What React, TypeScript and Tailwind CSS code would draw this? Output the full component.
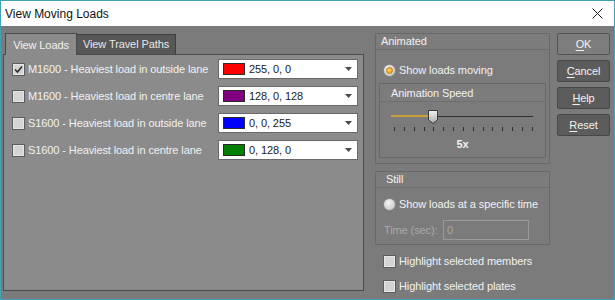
import React from "react";

const loads = [
  { label: "M1600 - Heaviest load in outside lane", color: "bg-[#ff0000]", rgb: "255, 0, 0", checked: true },
  { label: "M1600 - Heaviest load in centre lane", color: "bg-[#800080]", rgb: "128, 0, 128", checked: false },
  { label: "S1600 - Heaviest load in outside lane", color: "bg-[#0000ff]", rgb: "0, 0, 255", checked: false },
  { label: "S1600 - Heaviest load in centre lane", color: "bg-[#008000]", rgb: "0, 128, 0", checked: false },
];

function Checkbox({ checked }: { checked?: boolean }) {
  return (
    <div className="w-[13px] h-[13px] shrink-0 border border-[#5c5c5c] bg-[#cfcfcf] flex items-center justify-center">
      <div className="w-[11px] h-[11px] border border-[#e6e6e6] bg-[#d4d4d4] flex items-center justify-center">
        {checked && (
          <svg width="9" height="9" viewBox="0 0 9 9">
            <path d="M1 4.5 L3.5 7 L8 1.5" fill="none" stroke="#2b2b2b" strokeWidth="1.6" />
          </svg>
        )}
      </div>
    </div>
  );
}

function Radio({ checked }: { checked?: boolean }) {
  return (
    <div className="w-[13px] h-[13px] shrink-0 rounded-full border border-[#8a8a8a] bg-[radial-gradient(circle_at_40%_35%,#f4f4f4,#bdbdbd)] flex items-center justify-center">
      {checked && (
        <div className="w-[7px] h-[7px] rounded-full bg-[radial-gradient(circle_at_40%_35%,#ffd36a,#e69500)] border border-[#c07a00]" />
      )}
    </div>
  );
}

function GroupHeader({ children, pad }: { children: React.ReactNode; pad: string }) {
  return (
    <div className={`h-[16px] flex items-center border-b border-[#6f6f6f] bg-[#7c7c7c] ${pad}`}>
      {children}
    </div>
  );
}

function Btn({ first, rest, primary }: { first: string; rest: string; primary?: boolean }) {
  return (
    <div
      className={[
        "h-[22px] rounded-[2px] border flex items-center justify-center text-[#f2f2f2]",
        primary ? "bg-[#7d7d7d] border-[#555555]" : "bg-[#5c5c5c] border-[#474747]",
      ].join(" ")}
    >
      <span>
        <span className="underline underline-offset-2">{first}</span>
        {rest}
      </span>
    </div>
  );
}

export default function App() {
  return (
    <div
      className="w-[615px] h-[300px] border border-[#42a0b8] flex flex-col bg-[#7b7b7b] text-[11px] leading-none tracking-[-0.1px] whitespace-nowrap text-[#f2f2f2]"
      style={{ fontFamily: '"Liberation Sans", Arial, sans-serif' }}
    >
      {/* Title bar */}
      <div className="h-[25px] shrink-0 bg-white flex items-center justify-between pl-[4px] pr-[11px] text-[#111111]">
        <span className="text-[12px] tracking-normal">View Moving Loads</span>
        <svg width="11" height="11" viewBox="0 0 11 11">
          <path d="M0.5 0.5 L10.5 10.5 M10.5 0.5 L0.5 10.5" stroke="#1a1a1a" strokeWidth="1" />
        </svg>
      </div>

      <div className="flex-1 flex">
        {/* Left: tabs */}
        <div className="w-[361px] ml-[2px] pt-[7px] pb-[8px] flex flex-col">
          <div className="h-[21px] flex items-end pl-[2px]">
            <div className="relative z-10 -mb-px h-[22px] w-[72px] bg-[#8b8b8b] border border-b-0 border-[#4a4a4a] flex items-center justify-center pt-[1px]">
              View Loads
            </div>
            <div className="h-[20px] w-[100px] -ml-px bg-[#575757] border border-b-0 border-[#3f3f3f] flex items-center justify-center text-[#e8e8e8]">
              View Travel Paths
            </div>
          </div>
          <div className="flex-1 bg-[#8b8b8b] border border-[#4a4a4a] pt-[4px] flex flex-col gap-[7px]">
            {loads.map((l) => (
              <div key={l.label} className="h-[20px] flex items-center pl-[8px] pr-[5px]">
                <Checkbox checked={l.checked} />
                <span className="ml-[3px]">{l.label}</span>
                <div className="ml-auto w-[140px] h-[20px] bg-white border border-[#6a6a6a] flex items-center pl-[4px] pr-[5px] text-[#1a1a1a]">
                  <div className={`w-[22px] h-[12px] border border-[#2a2a2a] ${l.color}`} />
                  <span className="ml-[4px]">{l.rgb}</span>
                  <svg className="ml-auto" width="7" height="4" viewBox="0 0 7 4">
                    <path d="M0 0 H7 L3.5 4 Z" fill="#4a4a4a" />
                  </svg>
                </div>
              </div>
            ))}
          </div>
        </div>

        {/* Middle: options */}
        <div className="w-[175px] ml-[11px] pt-[7px] flex flex-col">
          <div className="h-[131px] border border-[#686868] rounded-[1px] flex flex-col">
            <GroupHeader pad="pl-[5px]">Animated</GroupHeader>
            <div className="h-[16px] mt-[12px] flex items-center pl-[7px]">
              <Radio checked />
              <span className="ml-[3px]">Show loads moving</span>
            </div>
            <div className="mx-[3px] mt-[5px] h-[75px] border border-[#686868] rounded-[1px] flex flex-col">
              <div className="h-[18px] flex items-center pl-[11px] pt-[1px] border-b border-[#6f6f6f] bg-[#7c7c7c]">
                Animation Speed
              </div>
              <div className="relative h-[14px] mt-[8px] ml-[11px] w-[142px]">
                <div className="absolute left-0 right-0 top-[6px] h-px bg-[#2e2e2e]" />
                <div className="absolute left-0 w-[42px] top-[5px] h-[2px] bg-[#c9a03a]" />
                <svg className="absolute left-[37px] top-0" width="10" height="14" viewBox="0 0 10 14">
                  <defs>
                    <linearGradient id="thumb" x1="0" y1="0" x2="0" y2="1">
                      <stop offset="0" stopColor="#f2f2f2" />
                      <stop offset="1" stopColor="#a9a9a9" />
                    </linearGradient>
                  </defs>
                  <path d="M0.5 0.5 H9.5 V10 L5 13.5 L0.5 10 Z" fill="url(#thumb)" stroke="#3a3a3a" strokeWidth="1" />
                </svg>
              </div>
              <div className="mt-[3px] ml-[14px] w-[139px] h-[4px] flex justify-between">
                {Array.from({ length: 15 }).map((_, i) => (
                  <div key={i} className="w-px h-[4px] bg-[#2e2e2e]" />
                ))}
              </div>
              <div className="mt-[8px] text-center font-bold">5x</div>
            </div>
          </div>

          <div className="mt-[7px] h-[74px] border border-[#686868] rounded-[1px] flex flex-col">
            <GroupHeader pad="pl-[10px]">Still</GroupHeader>
            <div className="h-[16px] mt-[8px] flex items-center pl-[7px]">
              <Radio />
              <span className="ml-[3px]">Show loads at a specific time</span>
            </div>
            <div className="mt-[8px] flex items-center pl-[8px]">
              <span className="text-[#a9a9a9] w-[59px]">Time (sec):</span>
              <div className="w-[86px] h-[20px] border border-[#9a9a9a] flex items-center pl-[3px] text-[#a9a9a9]">
                0
              </div>
            </div>
          </div>

          <div className="mt-[9px] h-[14px] flex items-center pl-[8px]">
            <Checkbox />
            <span className="ml-[3px]">Highlight selected members</span>
          </div>
          <div className="mt-[11px] h-[14px] flex items-center pl-[8px]">
            <Checkbox />
            <span className="ml-[3px]">Highlight selected plates</span>
          </div>
        </div>

        {/* Right: buttons */}
        <div className="w-[53px] ml-[7px] pt-[7px] flex flex-col gap-[5px]">
          <Btn first="O" rest="K" primary />
          <Btn first="C" rest="ancel" />
          <Btn first="H" rest="elp" />
          <Btn first="R" rest="eset" />
        </div>
      </div>
    </div>
  );
}
